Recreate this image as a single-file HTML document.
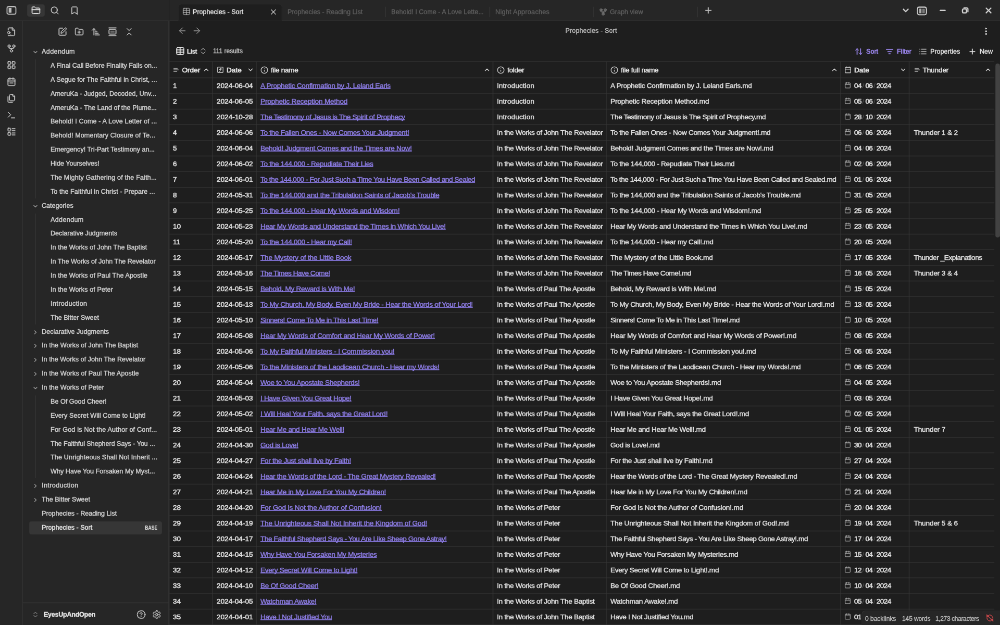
<!DOCTYPE html>
<html lang="en"><head><meta charset="utf-8"><title>Prophecies - Sort - EyesUpAndOpen - Obsidian</title>
<style>
html,body{margin:0;padding:0;background:#1e1e1e;}
body{width:1000px;height:625px;overflow:hidden;position:relative;}
#app{position:absolute;left:0;top:0;width:1920px;height:1200px;transform:scale(0.5208333);transform-origin:0 0;
 font-family:"Liberation Sans",sans-serif;font-size:12.6px;color:#e4e4e4;-webkit-text-stroke:0.4px currentColor;background:#1e1e1e;overflow:hidden;}
.ic{display:block;flex:none;}
/* top-left */
.topleft{position:absolute;left:0;top:0;width:325px;height:40px;background:#262626;border-bottom:1px solid #3c3c3c;box-sizing:border-box;}
.tb-btn{position:absolute;top:8px;width:30px;height:24px;display:flex;align-items:center;justify-content:center;color:#bdbdbd;border-radius:4px;}
.tb-btn.act{background:#363636;color:#e0e0e0;}
/* ribbon */
.ribbon{position:absolute;left:0;top:40px;width:44px;height:1160px;background:#262626;border-right:1px solid #3c3c3c;box-sizing:border-box;padding-top:8px;}
.rb{display:flex;width:43px;height:26px;margin-bottom:6px;align-items:center;justify-content:center;color:#bdbdbd;}
/* sidebar */
.sidebar{position:absolute;left:44px;top:40px;width:281px;height:1160px;background:#262626;border-right:1px solid #3c3c3c;box-sizing:border-box;}
.navbtns{position:absolute;left:1px;top:8px;width:278px;height:26px;display:flex;justify-content:center;gap:2px;}
.nb{width:30px;height:26px;display:flex;align-items:center;justify-content:center;color:#bdbdbd;}
.tree{position:absolute;left:12px;top:47.2px;width:255px;will-change:transform;}
.ti{position:relative;height:24.88px;margin-bottom:2px;line-height:24.88px;white-space:nowrap;color:#cecece;font-size:12.6px;border-radius:4px;-webkit-text-stroke:0.5px currentColor;}
.ti.fold{padding-left:24px;}
.ti .chev{position:absolute;left:6px;top:7px;color:#959595;}
.kids{margin-left:12px;padding-left:5px;}
.ti.kid{padding-left:24px;}
.ti.file{padding-left:24px;}
.ti.active{background:#363636;color:#e4e4e4;}
.tag{position:absolute;right:9px;top:6.5px;font-size:10.5px;line-height:12px;font-weight:700;letter-spacing:0;color:#d8d8d8;-webkit-text-stroke:0.15px currentColor;transform:scaleX(.82);transform-origin:100% 50%;}
.vault{position:absolute;left:0;bottom:0;width:280px;height:42px;border-top:1px solid #3c3c3c;}
.vsw{position:absolute;left:17px;top:15px;color:#909090;}
.vname{position:absolute;left:40px;top:13px;font-size:12.6px;font-weight:700;color:#e4e4e4;line-height:18px;letter-spacing:-.29px;-webkit-text-stroke:0.4px currentColor;}
.vic{position:absolute;top:13px;color:#bdbdbd;}
.v1{left:218px}.v2{left:248px}
/* tabbar */
.tabbar{position:absolute;left:325px;top:0;width:1595px;height:40px;background:#262626;border-bottom:1px solid #3c3c3c;box-sizing:border-box;}
.tab{position:absolute;top:7px;height:33px;box-sizing:border-box;color:#5e5e5e;font-size:12.6px;line-height:26px;white-space:nowrap;}
.tab.active{left:17px;width:199.5px;background:#1e1e1e;border:1px solid #2c2c2c;border-bottom:none;border-radius:7px 7px 0 0;color:#e4e4e4;}
.tab .tt{position:absolute;left:10px;top:3px;}
.tab.active .tt{left:27px;top:2px}
.tab .ticon{position:absolute;left:7.1px;top:6.3px;color:#b4b4b4}
.tab .tx{position:absolute;right:8px;top:7px;color:#e4e4e4}
.t2{left:217px;width:199.3px;border-right:1px solid #3c3c3c;height:20px;top:13px}
.t3{left:416.3px;width:199.3px;border-right:1px solid #3c3c3c;height:20px;top:13px}
.t4{left:615.6px;width:199.3px;border-right:1px solid #3c3c3c;height:20px;top:13px}
.t5{left:814.9px;width:199.8px;border-right:1px solid #3c3c3c;height:20px;top:13px}
.t2 .tt,.t3 .tt,.t4 .tt,.t5 .tt{top:-3px}
.t5 .tt{left:31px}
.t4 .tt{letter-spacing:.3px}
.t5 .ticon{left:10px;color:#808080}
.t5 .ticon{top:2px}
.newtab{position:absolute;left:1026px;top:11px;color:#bdbdbd}
.wc{position:absolute;top:11px;color:#d0d0d0}
.w1{left:1405px}.w2{left:1435px;top:10.5px}.w3{left:1477px;top:12px}.w4{left:1520px;top:12px}.w5{left:1564px}
/* main */
.main{position:absolute;left:325px;top:40px;width:1595px;height:1160px;background:#1e1e1e;}
.vh{position:absolute;left:0;top:0;width:1595px;height:40px;}
.nav1{position:absolute;left:16px;top:10px;color:#8a8a8a}
.nav2{position:absolute;left:44px;top:10px;color:#8a8a8a}
.vtitle{position:absolute;left:560px;width:500px;text-align:center;top:10px;line-height:18px;font-size:12.6px;color:#bcbcbc;letter-spacing:.1px}
.more{position:absolute;left:1559px;top:11px;color:#d0d0d0}
.toolbar{position:absolute;left:0;top:40px;width:1595px;height:38px;}
.tl{position:absolute;top:10px;line-height:18px;color:#e4e4e4}
.l1{left:12px;top:9px}.l2{left:34px;font-weight:700;font-size:12px;letter-spacing:-.6px;-webkit-text-stroke:0.2px currentColor}.l3{left:57px;top:10px;color:#a8a8a8}.l4{left:84px;font-size:12px;color:#c4c4c4;top:9px}
.tr{position:absolute;top:9.7px;display:flex;align-items:center;gap:6px;color:#e4e4e4;font-size:12.6px;line-height:18px}
.tr i{font-style:normal}
.tr.acc{color:#9d88f0;-webkit-text-stroke:0.65px currentColor}
.r1{left:1316px}.r2{left:1375px}.r3{left:1439px}.r4{left:1534px}
/* table */
.tbl{position:absolute;left:0;top:78px;width:1583px;padding-top:1px;will-change:transform;}
.row{position:relative;height:30px;box-sizing:border-box;padding-bottom:1px;display:flex;}
.cell{position:relative;box-sizing:border-box;height:29px;line-height:29px;padding-top:0.6px;margin-right:1px;padding-left:7px;white-space:nowrap;overflow:hidden;font-size:13.6px;letter-spacing:-0.29px;color:#dedede;-webkit-text-stroke:0.55px currentColor;flex:none}
.row .c1,.row .c2,.row .c6{letter-spacing:0;-webkit-text-stroke:0.7px currentColor}
.row .c7{letter-spacing:-.13px;padding-left:8.5px}
.c1{width:83px}.c2{width:83px}.c3{width:453px}.c4{width:217px}.c5{width:448px}.c6{width:131px}.c7{width:162px;margin-right:0}
.row.head{height:30.8px}
.head .cell{color:#bdbdbd;display:flex;align-items:center;gap:5px;padding-top:1px}
.head .cell span{color:#e4e4e4}
.hic{color:#bdbdbd}
.hch{color:#cfcfcf;margin-left:2px}
.hch.right{position:absolute;right:4px;top:8px}
.c2 .hch{margin-left:5px}
.c1 .hic{margin-right:.5px}
.c1 .hch{margin-left:0}
.c3 a{color:#8b7be0;text-decoration:underline;text-decoration-thickness:1.7px;text-underline-offset:0.4px;text-decoration-skip-ink:none;text-decoration-color:#7a6cc8;}
.c6{display:flex;align-items:center;}
.dic{color:#a0a0a0;margin-right:6px;margin-top:-3px}
.dt{letter-spacing:-0.6px}
.dt em{font-style:normal;color:#5a5a5a;padding:0 2.1px 0 1.6px;letter-spacing:0;-webkit-text-stroke:0}
.vscroll{position:absolute;left:1585.5px;top:82px;width:9px;height:334px;background:#424242;border-radius:4.5px;}
.status{position:absolute;left:1329px;top:1132px;height:28px;width:266px;background:#262626;border-top:1px solid #3c3c3c;border-left:1px solid #3c3c3c;border-radius:8px 0 0 0;box-sizing:border-box;font-size:12px;color:#bdbdbd;white-space:nowrap;line-height:30px}
.status span{position:absolute;top:0}
.s1{left:6px}.s2{left:77px;letter-spacing:-.1px}.s3{left:141px;letter-spacing:-.36px}
.sync{position:absolute;left:238px;top:6px;color:#d04a4c}

.sline{position:absolute;left:323.7px;top:40px;width:1.3px;height:1160px;background:#414141;}

.grid{position:absolute;left:0;top:78px;width:1584px;height:1082px;}
.hl{position:absolute;left:0;width:1584px;height:1px;background:#383838}
.vl{position:absolute;top:0;width:1px;height:1082px;background:#383838}
.guide{position:absolute;left:24px;width:1px;background:#3a3a3a}
.tt,.vtitle,.l2,.l4,.tr i,.status span,.vname,.tree,.tbl{will-change:transform;z-index:2}

</style></head>
<body>
<div id="app">
<div class="topleft"><span class="tb-btn" style="left:7px"><svg class="ic " width="20" height="20" viewBox="0 0 24 24" fill="none" stroke="currentColor" stroke-width="2.5" stroke-linecap="round" stroke-linejoin="round" ><rect x="1.600" y="3.300" width="20.800" height="17.400" rx="4"/><rect x="5.600" y="6.600" width="6.400" height="10.800" rx="0.800" fill="currentColor" stroke="none"/></svg></span><span class="tb-btn act" style="left:52px;width:34px"><svg class="ic " width="18" height="18" viewBox="0 0 24 24" fill="none" stroke="currentColor" stroke-width="2.5" stroke-linecap="round" stroke-linejoin="round" ><path d="M20 20a2 2 0 0 0 2-2V8a2 2 0 0 0-2-2h-7.900a2 2 0 0 1-1.690-.9L9.600 3.900A2 2 0 0 0 7.930 3H4a2 2 0 0 0-2 2v13a2 2 0 0 0 2 2Z"/><path d="M2 10h20"/></svg></span><span class="tb-btn" style="left:90px"><svg class="ic " width="18" height="18" viewBox="0 0 24 24" fill="none" stroke="currentColor" stroke-width="2.5" stroke-linecap="round" stroke-linejoin="round" ><circle cx="11" cy="11" r="8"/><path d="m21 21-4.300-4.300"/></svg></span><span class="tb-btn" style="left:128px"><svg class="ic " width="18" height="18" viewBox="0 0 24 24" fill="none" stroke="currentColor" stroke-width="2.5" stroke-linecap="round" stroke-linejoin="round" ><path d="m19 21-7-4-7 4V5a2 2 0 0 1 2-2h10a2 2 0 0 1 2 2v16z"/></svg></span></div>
<div class="ribbon"><span class="rb"><svg class="ic " width="18" height="18" viewBox="0 0 24 24" fill="none" stroke="currentColor" stroke-width="2.5" stroke-linecap="round" stroke-linejoin="round" ><path d="M4 22h14a2 2 0 0 0 2-2V7.500L14.500 2H6a2 2 0 0 0-2 2v3"/><polyline points="14 2 14 8 20 8"/><circle cx="5" cy="14" r="3"/><path d="m9 18-1.500-1.500"/></svg></span><span class="rb"><svg class="ic " width="18" height="18" viewBox="0 0 24 24" fill="none" stroke="currentColor" stroke-width="2.5" stroke-linecap="round" stroke-linejoin="round" ><circle cx="12" cy="18" r="3"/><circle cx="6" cy="6" r="3"/><circle cx="18" cy="6" r="3"/><path d="M18 9v2c0 .6-.4 1-1 1H7c-.6 0-1-.4-1-1V9"/><path d="M12 12v3"/></svg></span><span class="rb"><svg class="ic " width="18" height="18" viewBox="0 0 24 24" fill="none" stroke="currentColor" stroke-width="2.5" stroke-linecap="round" stroke-linejoin="round" ><rect width="7" height="7" x="3" y="3" rx="1"/><rect width="7" height="7" x="14" y="3" rx="1"/><rect width="7" height="7" x="14" y="14" rx="1"/><rect width="7" height="7" x="3" y="14" rx="1"/></svg></span><span class="rb"><svg class="ic " width="18" height="18" viewBox="0 0 24 24" fill="none" stroke="currentColor" stroke-width="2.5" stroke-linecap="round" stroke-linejoin="round" ><path d="M8 2v4"/><path d="M16 2v4"/><rect width="18" height="18" x="3" y="4" rx="2"/><path d="M3 10h18"/><path d="M8 15h8"/></svg></span><span class="rb"><svg class="ic " width="18" height="18" viewBox="0 0 24 24" fill="none" stroke="currentColor" stroke-width="2.5" stroke-linecap="round" stroke-linejoin="round" ><path d="M20 7h-3a2 2 0 0 1-2-2V2"/><path d="M9 18a2 2 0 0 1-2-2V4a2 2 0 0 1 2-2h7l4 4v10a2 2 0 0 1-2 2Z"/><path d="M3 7.600v12.800A1.600 1.600 0 0 0 4.600 22h9.800"/></svg></span><span class="rb"><svg class="ic " width="18" height="18" viewBox="0 0 24 24" fill="none" stroke="currentColor" stroke-width="2.5" stroke-linecap="round" stroke-linejoin="round" ><polyline points="4 17 10 11 4 5"/><line x1="12" x2="20" y1="19" y2="19"/></svg></span><span class="rb"><svg class="ic " width="18" height="18" viewBox="0 0 24 24" fill="none" stroke="currentColor" stroke-width="2.5" stroke-linecap="round" stroke-linejoin="round" ><rect width="7" height="7" x="3" y="3" rx="1"/><rect width="7" height="7" x="3" y="14" rx="1"/><path d="M14 4h7"/><path d="M14 9h7"/><path d="M14 15h7"/><path d="M14 20h7"/></svg></span></div>
<div class="sidebar">
<div class="navbtns"><span class="nb"><svg class="ic " width="18" height="18" viewBox="0 0 24 24" fill="none" stroke="currentColor" stroke-width="2.5" stroke-linecap="round" stroke-linejoin="round" ><path d="M12 3H5a2 2 0 0 0-2 2v14a2 2 0 0 0 2 2h14a2 2 0 0 0 2-2v-7"/><path d="M18.375 2.625a2.121 2.121 0 1 1 3 3L12 15l-4 1 1-4Z"/></svg></span><span class="nb"><svg class="ic " width="18" height="18" viewBox="0 0 24 24" fill="none" stroke="currentColor" stroke-width="2.5" stroke-linecap="round" stroke-linejoin="round" ><path d="M12 10v6"/><path d="M9 13h6"/><path d="M20 20a2 2 0 0 0 2-2V8a2 2 0 0 0-2-2h-7.900a2 2 0 0 1-1.690-.9L9.600 3.900A2 2 0 0 0 7.930 3H4a2 2 0 0 0-2 2v13a2 2 0 0 0 2 2Z"/></svg></span><span class="nb"><svg class="ic " width="18" height="18" viewBox="0 0 24 24" fill="none" stroke="currentColor" stroke-width="2.5" stroke-linecap="round" stroke-linejoin="round" ><path d="m3 8 4-4 4 4"/><path d="M7 4v16"/><path d="M11 12h4"/><path d="M11 16h7"/><path d="M11 20h10"/></svg></span><span class="nb"><svg class="ic " width="18" height="18" viewBox="0 0 24 24" fill="none" stroke="currentColor" stroke-width="2.5" stroke-linecap="round" stroke-linejoin="round" ><path d="M3 2h18"/><rect width="18" height="12" x="3" y="6" rx="2"/><rect x="6.500" y="9.500" width="11" height="5" fill="currentColor" stroke="none" opacity=".45"/><path d="M3 22h18"/></svg></span><span class="nb"><svg class="ic " width="18" height="18" viewBox="0 0 24 24" fill="none" stroke="currentColor" stroke-width="2.5" stroke-linecap="round" stroke-linejoin="round" ><path d="m7 20 5-5 5 5"/><path d="m7 4 5 5 5-5"/></svg></span></div>
<div class="guide" style="top:74.08px;height:266.80px"></div><div class="guide" style="top:369.76px;height:213.04px"></div><div class="guide" style="top:719.20px;height:159.28px"></div><div class="tree">
<div class="ti fold"><svg class="ic chev" width="12" height="12" viewBox="0 0 24 24" fill="none" stroke="currentColor" stroke-width="3.25" stroke-linecap="round" stroke-linejoin="round" ><path d="m6 9 6 6 6-6"/></svg><span style="letter-spacing:0.372px">Addendum</span></div>
<div class="kids">
<div class="ti kid"><span style="letter-spacing:-0.034px">A Final Call Before Finality Falls on...</span></div>
<div class="ti kid"><span style="letter-spacing:0.044px">A Segue for The Faithful in Christ, ...</span></div>
<div class="ti kid"><span style="letter-spacing:0.049px">AmeruKa - Judged, Decoded, Unv...</span></div>
<div class="ti kid"><span style="letter-spacing:0.076px">AmeruKa - The Land of the Plume...</span></div>
<div class="ti kid"><span style="letter-spacing:0.135px">Behold! I Come - A Love Letter of ...</span></div>
<div class="ti kid"><span style="letter-spacing:0.116px">Behold! Momentary Closure of Te...</span></div>
<div class="ti kid"><span>Emergency! Tri-Part Testimony an...</span></div>
<div class="ti kid"><span>Hide Yourselves!</span></div>
<div class="ti kid"><span style="letter-spacing:0.163px">The Mighty Gathering of the Faith...</span></div>
<div class="ti kid"><span style="letter-spacing:0.044px">To the Faithful in Christ - Prepare ...</span></div>
</div>
<div class="ti fold"><svg class="ic chev" width="12" height="12" viewBox="0 0 24 24" fill="none" stroke="currentColor" stroke-width="3.25" stroke-linecap="round" stroke-linejoin="round" ><path d="m6 9 6 6 6-6"/></svg><span>Categories</span></div>
<div class="kids">
<div class="ti kid"><span style="letter-spacing:0.348px">Addendum</span></div>
<div class="ti kid"><span>Declarative Judgments</span></div>
<div class="ti kid"><span style="letter-spacing:0.096px">In the Works of John The Baptist</span></div>
<div class="ti kid"><span>In The Works of John The Revelator</span></div>
<div class="ti kid"><span style="letter-spacing:0.102px">In the Works of Paul The Apostle</span></div>
<div class="ti kid"><span style="letter-spacing:0.091px">In the Works of Peter</span></div>
<div class="ti kid"><span style="letter-spacing:0.392px">Introduction</span></div>
<div class="ti kid"><span>The Bitter Sweet</span></div>
</div>
<div class="ti fold"><svg class="ic chev" width="12" height="12" viewBox="0 0 24 24" fill="none" stroke="currentColor" stroke-width="3.25" stroke-linecap="round" stroke-linejoin="round" ><path d="m9 18 6-6-6-6"/></svg><span style="letter-spacing:0.05px">Declarative Judgments</span></div>
<div class="ti fold"><svg class="ic chev" width="12" height="12" viewBox="0 0 24 24" fill="none" stroke="currentColor" stroke-width="3.25" stroke-linecap="round" stroke-linejoin="round" ><path d="m9 18 6-6-6-6"/></svg><span style="letter-spacing:0.096px">In the Works of John The Baptist</span></div>
<div class="ti fold"><svg class="ic chev" width="12" height="12" viewBox="0 0 24 24" fill="none" stroke="currentColor" stroke-width="3.25" stroke-linecap="round" stroke-linejoin="round" ><path d="m9 18 6-6-6-6"/></svg><span style="letter-spacing:0.048px">In the Works of John The Revelator</span></div>
<div class="ti fold"><svg class="ic chev" width="12" height="12" viewBox="0 0 24 24" fill="none" stroke="currentColor" stroke-width="3.25" stroke-linecap="round" stroke-linejoin="round" ><path d="m9 18 6-6-6-6"/></svg><span style="letter-spacing:0.117px">In the Works of Paul The Apostle</span></div>
<div class="ti fold"><svg class="ic chev" width="12" height="12" viewBox="0 0 24 24" fill="none" stroke="currentColor" stroke-width="3.25" stroke-linecap="round" stroke-linejoin="round" ><path d="m6 9 6 6 6-6"/></svg><span style="letter-spacing:0.091px">In the Works of Peter</span></div>
<div class="kids">
<div class="ti kid"><span>Be Of Good Cheer!</span></div>
<div class="ti kid"><span style="letter-spacing:0.051px">Every Secret Will Come to Light!</span></div>
<div class="ti kid"><span style="letter-spacing:0.197px">For God is Not the Author of Conf...</span></div>
<div class="ti kid"><span style="letter-spacing:-0.048px">The Faithful Shepherd Says - You ...</span></div>
<div class="ti kid"><span style="letter-spacing:0.14px">The Unrighteous Shall Not Inherit ...</span></div>
<div class="ti kid"><span style="letter-spacing:0.036px">Why Have You Forsaken My Myst...</span></div>
</div>
<div class="ti fold"><svg class="ic chev" width="12" height="12" viewBox="0 0 24 24" fill="none" stroke="currentColor" stroke-width="3.25" stroke-linecap="round" stroke-linejoin="round" ><path d="m9 18 6-6-6-6"/></svg><span style="letter-spacing:0.4px">Introduction</span></div>
<div class="ti fold"><svg class="ic chev" width="12" height="12" viewBox="0 0 24 24" fill="none" stroke="currentColor" stroke-width="3.25" stroke-linecap="round" stroke-linejoin="round" ><path d="m9 18 6-6-6-6"/></svg><span>The Bitter Sweet</span></div>
<div class="ti file"><span>Prophecies - Reading List</span></div>
<div class="ti file active"><span>Prophecies - Sort</span><b class="tag">BASE</b></div>
</div>
<div class="vault"><span class="vsw"><svg class="ic " width="14" height="14" viewBox="0 0 24 24" fill="none" stroke="currentColor" stroke-width="2.5" stroke-linecap="round" stroke-linejoin="round" ><path d="m7 15 5 5 5-5"/><path d="m7 9 5-5 5 5"/></svg></span><span class="vname">EyesUpAndOpen</span><span class="vic v1"><svg class="ic " width="18" height="18" viewBox="0 0 24 24" fill="none" stroke="currentColor" stroke-width="2.5" stroke-linecap="round" stroke-linejoin="round" ><circle cx="12" cy="12" r="10"/><path d="M9.090 9a3 3 0 0 1 5.830 1c0 2-3 3-3 3"/><path d="M12 17h.01"/></svg></span><span class="vic v2"><svg class="ic " width="18" height="18" viewBox="0 0 24 24" fill="none" stroke="currentColor" stroke-width="2.5" stroke-linecap="round" stroke-linejoin="round" ><path d="M12.220 2h-.44a2 2 0 0 0-2 2v.18a2 2 0 0 1-1 1.730l-.43.250a2 2 0 0 1-2 0l-.15-.08a2 2 0 0 0-2.730.730l-.22.380a2 2 0 0 0 .730 2.730l.15.100a2 2 0 0 1 1 1.720v.510a2 2 0 0 1-1 1.740l-.15.090a2 2 0 0 0-.730 2.730l.22.380a2 2 0 0 0 2.730.730l.15-.08a2 2 0 0 1 2 0l.43.250a2 2 0 0 1 1 1.730V20a2 2 0 0 0 2 2h.44a2 2 0 0 0 2-2v-.18a2 2 0 0 1 1-1.730l.43-.250a2 2 0 0 1 2 0l.15.080a2 2 0 0 0 2.730-.730l.22-.390a2 2 0 0 0-.730-2.730l-.15-.08a2 2 0 0 1-1-1.740v-.5a2 2 0 0 1 1-1.740l.15-.09a2 2 0 0 0 .730-2.730l-.22-.380a2 2 0 0 0-2.730-.730l-.15.080a2 2 0 0 1-2 0l-.43-.250a2 2 0 0 1-1-1.730V4a2 2 0 0 0-2-2z"/><circle cx="12" cy="12" r="3"/></svg></span></div>
</div>
<div class="tabbar">
<div class="tab active"><svg class="ic ticon" width="16" height="16" viewBox="0 0 24 24" fill="none" stroke="currentColor" stroke-width="1.875" stroke-linecap="round" stroke-linejoin="round" ><path d="M12 3v18"/><rect width="18" height="18" x="3" y="3" rx="2"/><path d="M3 9h18"/><path d="M3 15h18"/></svg><span class="tt">Prophecies - Sort</span><svg class="ic tx" width="16" height="16" viewBox="0 0 24 24" fill="none" stroke="currentColor" stroke-width="2.5" stroke-linecap="round" stroke-linejoin="round" ><path d="M18 6 6 18"/><path d="m6 6 12 12"/></svg></div>
<div class="tab t2"><span class="tt">Prophecies - Reading List</span></div>
<div class="tab t3"><span class="tt">Behold! I Come - A Love Lette...</span></div>
<div class="tab t4"><span class="tt">Night Approaches</span></div>
<div class="tab t5"><svg class="ic ticon" width="16" height="16" viewBox="0 0 24 24" fill="none" stroke="currentColor" stroke-width="2.5" stroke-linecap="round" stroke-linejoin="round" ><circle cx="12" cy="18" r="3"/><circle cx="6" cy="6" r="3"/><circle cx="18" cy="6" r="3"/><path d="M18 9v2c0 .6-.4 1-1 1H7c-.6 0-1-.4-1-1V9"/><path d="M12 12v3"/></svg><span class="tt">Graph view</span></div>
<span class="newtab"><svg class="ic " width="18" height="18" viewBox="0 0 24 24" fill="none" stroke="currentColor" stroke-width="2.5" stroke-linecap="round" stroke-linejoin="round" ><path d="M5 12h14"/><path d="M12 5v14"/></svg></span>
<span class="wc w1"><svg class="ic " width="18" height="18" viewBox="0 0 24 24" fill="none" stroke="currentColor" stroke-width="3.0" stroke-linecap="round" stroke-linejoin="round" ><path d="m6 9 6 6 6-6"/></svg></span><span class="wc w2"><svg class="ic " width="20" height="20" viewBox="0 0 24 24" fill="none" stroke="currentColor" stroke-width="2.5" stroke-linecap="round" stroke-linejoin="round" ><rect x="1.600" y="3.300" width="20.800" height="17.400" rx="4"/><rect x="5.200" y="6.800" width="13.600" height="10.400" rx="0.800" fill="currentColor" stroke="none" opacity=".5"/><rect x="6" y="6.800" width="5" height="10.400" fill="currentColor" stroke="none" opacity=".6"/><path d="M11.800 6.500v11" stroke="#262626" stroke-width="1.600"/></svg></span><span class="wc w3"><svg class="ic " width="16" height="16" viewBox="0 0 24 24" fill="none" stroke="currentColor" stroke-width="3.5" stroke-linecap="round" stroke-linejoin="round" ><path d="M5 12h14"/></svg></span><span class="wc w4"><svg class="ic " width="16" height="16" viewBox="0 0 24 24" fill="none" stroke="currentColor" stroke-width="3.75" stroke-linecap="round" stroke-linejoin="round" ><rect x="4.500" y="7.500" width="11.500" height="11.500" rx="3.500"/><path d="M9 4.500h7.500a3.500 3.500 0 0 1 3.500 3.500v7.500"/></svg></span><span class="wc w5"><svg class="ic " width="18" height="18" viewBox="0 0 24 24" fill="none" stroke="currentColor" stroke-width="3.0" stroke-linecap="round" stroke-linejoin="round" ><path d="M18 6 6 18"/><path d="m6 6 12 12"/></svg></span>
</div>
<div class="main">
<div class="vh"><span class="nav1"><svg class="ic " width="18" height="18" viewBox="0 0 24 24" fill="none" stroke="currentColor" stroke-width="2.5" stroke-linecap="round" stroke-linejoin="round" ><path d="m12 19-7-7 7-7"/><path d="M19 12H5"/></svg></span><span class="nav2"><svg class="ic " width="18" height="18" viewBox="0 0 24 24" fill="none" stroke="currentColor" stroke-width="2.5" stroke-linecap="round" stroke-linejoin="round" ><path d="M5 12h14"/><path d="m12 5 7 7-7 7"/></svg></span><span class="vtitle">Prophecies - Sort</span><span class="more"><svg class="ic " width="18" height="18" viewBox="0 0 24 24" fill="none" stroke="currentColor" stroke-width="2.5" stroke-linecap="round" stroke-linejoin="round" ><circle cx="12" cy="12" r="1.200"/><circle cx="12" cy="5" r="1.200"/><circle cx="12" cy="19" r="1.200"/></svg></span></div>
<div class="toolbar"><span class="tl l1"><svg class="ic " width="18" height="18" viewBox="0 0 24 24" fill="none" stroke="currentColor" stroke-width="2.5" stroke-linecap="round" stroke-linejoin="round" ><path d="M12 3v18"/><rect width="18" height="18" x="3" y="3" rx="2"/><path d="M3 9h18"/><path d="M3 15h18"/></svg></span><span class="tl l2">List</span><span class="tl l3"><svg class="ic " width="16" height="16" viewBox="0 0 24 24" fill="none" stroke="currentColor" stroke-width="2.5" stroke-linecap="round" stroke-linejoin="round" ><path d="m7 15 5 5 5-5"/><path d="m7 9 5-5 5 5"/></svg></span><span class="tl l4">111 results</span><span class="tr r1 acc"><svg class="ic " width="16" height="16" viewBox="0 0 24 24" fill="none" stroke="currentColor" stroke-width="2.5" stroke-linecap="round" stroke-linejoin="round" ><path d="m21 16-4 4-4-4"/><path d="M17 20V4"/><path d="m3 8 4-4 4 4"/><path d="M7 4v16"/></svg><i>Sort</i></span><span class="tr r2 acc"><svg class="ic " width="16" height="16" viewBox="0 0 24 24" fill="none" stroke="currentColor" stroke-width="2.5" stroke-linecap="round" stroke-linejoin="round" ><path d="M3 6h18"/><path d="M7 12h10"/><path d="M10 18h4"/></svg><i>Filter</i></span><span class="tr r3"><svg class="ic " width="16" height="16" viewBox="0 0 24 24" fill="none" stroke="currentColor" stroke-width="1.875" stroke-linecap="round" stroke-linejoin="round" ><path d="M3 12h.01"/><path d="M3 18.500h.01"/><path d="M3 5.500h.01"/><path d="M8 12h13"/><path d="M8 18.500h13"/><path d="M8 5.500h13"/></svg><i>Properties</i></span><span class="tr r4"><svg class="ic " width="16" height="16" viewBox="0 0 24 24" fill="none" stroke="currentColor" stroke-width="2.5" stroke-linecap="round" stroke-linejoin="round" ><path d="M5 12h14"/><path d="M12 5v14"/></svg><i>New</i></span></div>
<div class="grid"><div class="hl" style="top:0.0px"></div><div class="hl" style="top:30.8px"></div><div class="hl" style="top:60.8px"></div><div class="hl" style="top:90.8px"></div><div class="hl" style="top:120.8px"></div><div class="hl" style="top:150.8px"></div><div class="hl" style="top:180.8px"></div><div class="hl" style="top:210.8px"></div><div class="hl" style="top:240.8px"></div><div class="hl" style="top:270.8px"></div><div class="hl" style="top:300.8px"></div><div class="hl" style="top:330.8px"></div><div class="hl" style="top:360.8px"></div><div class="hl" style="top:390.8px"></div><div class="hl" style="top:420.8px"></div><div class="hl" style="top:450.8px"></div><div class="hl" style="top:480.8px"></div><div class="hl" style="top:510.8px"></div><div class="hl" style="top:540.8px"></div><div class="hl" style="top:570.8px"></div><div class="hl" style="top:600.8px"></div><div class="hl" style="top:630.8px"></div><div class="hl" style="top:660.8px"></div><div class="hl" style="top:690.8px"></div><div class="hl" style="top:720.8px"></div><div class="hl" style="top:750.8px"></div><div class="hl" style="top:780.8px"></div><div class="hl" style="top:810.8px"></div><div class="hl" style="top:840.8px"></div><div class="hl" style="top:870.8px"></div><div class="hl" style="top:900.8px"></div><div class="hl" style="top:930.8px"></div><div class="hl" style="top:960.8px"></div><div class="hl" style="top:990.8px"></div><div class="hl" style="top:1020.8px"></div><div class="hl" style="top:1050.8px"></div><div class="hl" style="top:1080.8px"></div><div class="vl" style="left:83px"></div><div class="vl" style="left:167px"></div><div class="vl" style="left:621px"></div><div class="vl" style="left:839px"></div><div class="vl" style="left:1288px"></div><div class="vl" style="left:1420px"></div></div>
<div class="tbl">
<div class="row head"><div class="cell c1"><svg class="ic hic" width="12" height="12" viewBox="0 0 24 24" fill="none" stroke="currentColor" stroke-width="2.5" stroke-linecap="round" stroke-linejoin="round" ><path d="M17 6.100H3"/><path d="M21 12.100H3"/><path d="M15.100 18H3"/></svg><span>Order</span><svg class="ic hch" width="14" height="14" viewBox="0 0 24 24" fill="none" stroke="currentColor" stroke-width="2.5" stroke-linecap="round" stroke-linejoin="round" ><path d="m18 15-6-6-6 6"/></svg></div><div class="cell c2"><svg class="ic hic" width="14" height="14" viewBox="0 0 24 24" fill="none" stroke="currentColor" stroke-width="2.5" stroke-linecap="round" stroke-linejoin="round" ><rect width="18" height="18" x="3" y="3" rx="2" ry="2"/><path d="M9 17c2 0 2.800-1 2.800-2.800V10c0-2 1-3.300 3.200-3"/><path d="M9 11.200h5.700"/></svg><span>Date</span><svg class="ic hch" width="14" height="14" viewBox="0 0 24 24" fill="none" stroke="currentColor" stroke-width="2.5" stroke-linecap="round" stroke-linejoin="round" ><path d="m6 9 6 6 6-6"/></svg></div><div class="cell c3"><svg class="ic hic" width="15" height="15" viewBox="0 0 24 24" fill="none" stroke="currentColor" stroke-width="2.5" stroke-linecap="round" stroke-linejoin="round" ><circle cx="12" cy="12" r="10"/><path d="M12 16v-4"/><path d="M12 8h.01"/></svg><span>file name</span><svg class="ic hch right" width="14" height="14" viewBox="0 0 24 24" fill="none" stroke="currentColor" stroke-width="2.5" stroke-linecap="round" stroke-linejoin="round" ><path d="m18 15-6-6-6 6"/></svg></div><div class="cell c4"><svg class="ic hic" width="15" height="15" viewBox="0 0 24 24" fill="none" stroke="currentColor" stroke-width="2.5" stroke-linecap="round" stroke-linejoin="round" ><circle cx="12" cy="12" r="10"/><path d="M12 16v-4"/><path d="M12 8h.01"/></svg><span>folder</span></div><div class="cell c5"><svg class="ic hic" width="15" height="15" viewBox="0 0 24 24" fill="none" stroke="currentColor" stroke-width="2.5" stroke-linecap="round" stroke-linejoin="round" ><circle cx="12" cy="12" r="10"/><path d="M12 16v-4"/><path d="M12 8h.01"/></svg><span>file full name</span><svg class="ic hch right" width="14" height="14" viewBox="0 0 24 24" fill="none" stroke="currentColor" stroke-width="2.5" stroke-linecap="round" stroke-linejoin="round" ><path d="m18 15-6-6-6 6"/></svg></div><div class="cell c6"><svg class="ic hic" width="14" height="14" viewBox="0 0 24 24" fill="none" stroke="currentColor" stroke-width="2.5" stroke-linecap="round" stroke-linejoin="round" ><path d="M8 2v4"/><path d="M16 2v4"/><rect width="18" height="18" x="3" y="4" rx="2"/><path d="M3 10h18"/></svg><span>Date</span><svg class="ic hch right" width="14" height="14" viewBox="0 0 24 24" fill="none" stroke="currentColor" stroke-width="2.5" stroke-linecap="round" stroke-linejoin="round" ><path d="m6 9 6 6 6-6"/></svg></div><div class="cell c7"><svg class="ic hic" width="12" height="12" viewBox="0 0 24 24" fill="none" stroke="currentColor" stroke-width="2.5" stroke-linecap="round" stroke-linejoin="round" ><path d="M17 6.100H3"/><path d="M21 12.100H3"/><path d="M15.100 18H3"/></svg><span>Thunder</span><svg class="ic hch right" width="14" height="14" viewBox="0 0 24 24" fill="none" stroke="currentColor" stroke-width="2.5" stroke-linecap="round" stroke-linejoin="round" ><path d="m18 15-6-6-6 6"/></svg></div></div>
<div class="row"><div class="cell c1">1</div><div class="cell c2">2024-06-04</div><div class="cell c3"><a>A Prophetic Confirmation by J. Leland Earls</a></div><div class="cell c4" style="letter-spacing:.08px">Introduction</div><div class="cell c5">A Prophetic Confirmation by J. Leland Earls.md</div><div class="cell c6"><svg class="ic dic" width="13" height="13" viewBox="0 0 24 24" fill="none" stroke="currentColor" stroke-width="2.5" stroke-linecap="round" stroke-linejoin="round" ><path d="M8 2v4"/><path d="M16 2v4"/><rect width="18" height="18" x="3" y="4" rx="2"/><path d="M3 10h18"/></svg><span class="dt">04<em>/</em>06<em>/</em>2024</span></div><div class="cell c7"></div></div>
<div class="row"><div class="cell c1">2</div><div class="cell c2">2024-06-05</div><div class="cell c3" style="letter-spacing:-0.165px"><a>Prophetic Reception Method</a></div><div class="cell c4" style="letter-spacing:.08px">Introduction</div><div class="cell c5" style="letter-spacing:-0.165px">Prophetic Reception Method.md</div><div class="cell c6"><svg class="ic dic" width="13" height="13" viewBox="0 0 24 24" fill="none" stroke="currentColor" stroke-width="2.5" stroke-linecap="round" stroke-linejoin="round" ><path d="M8 2v4"/><path d="M16 2v4"/><rect width="18" height="18" x="3" y="4" rx="2"/><path d="M3 10h18"/></svg><span class="dt">05<em>/</em>06<em>/</em>2024</span></div><div class="cell c7"></div></div>
<div class="row"><div class="cell c1">3</div><div class="cell c2">2024-10-28</div><div class="cell c3" style="letter-spacing:-0.346px"><a>The Testimony of Jesus is The Spirit of Prophecy</a></div><div class="cell c4" style="letter-spacing:.08px">Introduction</div><div class="cell c5" style="letter-spacing:-0.346px">The Testimony of Jesus is The Spirit of Prophecy.md</div><div class="cell c6"><svg class="ic dic" width="13" height="13" viewBox="0 0 24 24" fill="none" stroke="currentColor" stroke-width="2.5" stroke-linecap="round" stroke-linejoin="round" ><path d="M8 2v4"/><path d="M16 2v4"/><rect width="18" height="18" x="3" y="4" rx="2"/><path d="M3 10h18"/></svg><span class="dt">28<em>/</em>10<em>/</em>2024</span></div><div class="cell c7"></div></div>
<div class="row"><div class="cell c1">4</div><div class="cell c2">2024-06-06</div><div class="cell c3"><a>To the Fallen Ones - Now Comes Your Judgment!</a></div><div class="cell c4">In the Works of John The Revelator</div><div class="cell c5">To the Fallen Ones - Now Comes Your Judgment!.md</div><div class="cell c6"><svg class="ic dic" width="13" height="13" viewBox="0 0 24 24" fill="none" stroke="currentColor" stroke-width="2.5" stroke-linecap="round" stroke-linejoin="round" ><path d="M8 2v4"/><path d="M16 2v4"/><rect width="18" height="18" x="3" y="4" rx="2"/><path d="M3 10h18"/></svg><span class="dt">06<em>/</em>06<em>/</em>2024</span></div><div class="cell c7">Thunder 1 &amp; 2</div></div>
<div class="row"><div class="cell c1">5</div><div class="cell c2">2024-06-04</div><div class="cell c3"><a>Behold! Judgment Comes and the Times are Now!</a></div><div class="cell c4">In the Works of John The Revelator</div><div class="cell c5">Behold! Judgment Comes and the Times are Now!.md</div><div class="cell c6"><svg class="ic dic" width="13" height="13" viewBox="0 0 24 24" fill="none" stroke="currentColor" stroke-width="2.5" stroke-linecap="round" stroke-linejoin="round" ><path d="M8 2v4"/><path d="M16 2v4"/><rect width="18" height="18" x="3" y="4" rx="2"/><path d="M3 10h18"/></svg><span class="dt">04<em>/</em>06<em>/</em>2024</span></div><div class="cell c7"></div></div>
<div class="row"><div class="cell c1">6</div><div class="cell c2">2024-06-02</div><div class="cell c3"><a>To the 144,000 - Repudiate Their Lies</a></div><div class="cell c4">In the Works of John The Revelator</div><div class="cell c5">To the 144,000 - Repudiate Their Lies.md</div><div class="cell c6"><svg class="ic dic" width="13" height="13" viewBox="0 0 24 24" fill="none" stroke="currentColor" stroke-width="2.5" stroke-linecap="round" stroke-linejoin="round" ><path d="M8 2v4"/><path d="M16 2v4"/><rect width="18" height="18" x="3" y="4" rx="2"/><path d="M3 10h18"/></svg><span class="dt">02<em>/</em>06<em>/</em>2024</span></div><div class="cell c7"></div></div>
<div class="row"><div class="cell c1">7</div><div class="cell c2">2024-06-01</div><div class="cell c3" style="letter-spacing:-0.446px"><a>To the 144,000 - For Just Such a Time You Have Been Called and Sealed</a></div><div class="cell c4">In the Works of John The Revelator</div><div class="cell c5" style="letter-spacing:-0.446px">To the 144,000 - For Just Such a Time You Have Been Called and Sealed.md</div><div class="cell c6"><svg class="ic dic" width="13" height="13" viewBox="0 0 24 24" fill="none" stroke="currentColor" stroke-width="2.5" stroke-linecap="round" stroke-linejoin="round" ><path d="M8 2v4"/><path d="M16 2v4"/><rect width="18" height="18" x="3" y="4" rx="2"/><path d="M3 10h18"/></svg><span class="dt">01<em>/</em>06<em>/</em>2024</span></div><div class="cell c7"></div></div>
<div class="row"><div class="cell c1">8</div><div class="cell c2">2024-05-31</div><div class="cell c3"><a>To the 144,000 and the Tribulation Saints of Jacob&#x27;s Trouble</a></div><div class="cell c4">In the Works of John The Revelator</div><div class="cell c5">To the 144,000 and the Tribulation Saints of Jacob&#x27;s Trouble.md</div><div class="cell c6"><svg class="ic dic" width="13" height="13" viewBox="0 0 24 24" fill="none" stroke="currentColor" stroke-width="2.5" stroke-linecap="round" stroke-linejoin="round" ><path d="M8 2v4"/><path d="M16 2v4"/><rect width="18" height="18" x="3" y="4" rx="2"/><path d="M3 10h18"/></svg><span class="dt">31<em>/</em>05<em>/</em>2024</span></div><div class="cell c7"></div></div>
<div class="row"><div class="cell c1">9</div><div class="cell c2">2024-05-25</div><div class="cell c3"><a>To the 144,000 - Hear My Words and Wisdom!</a></div><div class="cell c4">In the Works of John The Revelator</div><div class="cell c5">To the 144,000 - Hear My Words and Wisdom!.md</div><div class="cell c6"><svg class="ic dic" width="13" height="13" viewBox="0 0 24 24" fill="none" stroke="currentColor" stroke-width="2.5" stroke-linecap="round" stroke-linejoin="round" ><path d="M8 2v4"/><path d="M16 2v4"/><rect width="18" height="18" x="3" y="4" rx="2"/><path d="M3 10h18"/></svg><span class="dt">25<em>/</em>05<em>/</em>2024</span></div><div class="cell c7"></div></div>
<div class="row"><div class="cell c1">10</div><div class="cell c2">2024-05-23</div><div class="cell c3"><a>Hear My Words and Understand the Times in Which You Live!</a></div><div class="cell c4">In the Works of John The Revelator</div><div class="cell c5">Hear My Words and Understand the Times in Which You Live!.md</div><div class="cell c6"><svg class="ic dic" width="13" height="13" viewBox="0 0 24 24" fill="none" stroke="currentColor" stroke-width="2.5" stroke-linecap="round" stroke-linejoin="round" ><path d="M8 2v4"/><path d="M16 2v4"/><rect width="18" height="18" x="3" y="4" rx="2"/><path d="M3 10h18"/></svg><span class="dt">23<em>/</em>05<em>/</em>2024</span></div><div class="cell c7"></div></div>
<div class="row"><div class="cell c1">11</div><div class="cell c2">2024-05-20</div><div class="cell c3"><a>To the 144,000 - Hear my Call!</a></div><div class="cell c4">In the Works of John The Revelator</div><div class="cell c5">To the 144,000 - Hear my Call!.md</div><div class="cell c6"><svg class="ic dic" width="13" height="13" viewBox="0 0 24 24" fill="none" stroke="currentColor" stroke-width="2.5" stroke-linecap="round" stroke-linejoin="round" ><path d="M8 2v4"/><path d="M16 2v4"/><rect width="18" height="18" x="3" y="4" rx="2"/><path d="M3 10h18"/></svg><span class="dt">20<em>/</em>05<em>/</em>2024</span></div><div class="cell c7"></div></div>
<div class="row"><div class="cell c1">12</div><div class="cell c2">2024-05-17</div><div class="cell c3" style="letter-spacing:-0.18px"><a>The Mystery of the Little Book</a></div><div class="cell c4">In the Works of John The Revelator</div><div class="cell c5" style="letter-spacing:-0.18px">The Mystery of the Little Book.md</div><div class="cell c6"><svg class="ic dic" width="13" height="13" viewBox="0 0 24 24" fill="none" stroke="currentColor" stroke-width="2.5" stroke-linecap="round" stroke-linejoin="round" ><path d="M8 2v4"/><path d="M16 2v4"/><rect width="18" height="18" x="3" y="4" rx="2"/><path d="M3 10h18"/></svg><span class="dt">17<em>/</em>05<em>/</em>2024</span></div><div class="cell c7" style="letter-spacing:-.41px">Thunder _Explanations</div></div>
<div class="row"><div class="cell c1">13</div><div class="cell c2">2024-05-16</div><div class="cell c3" style="letter-spacing:-0.46px"><a>The Times Have Come!</a></div><div class="cell c4">In the Works of John The Revelator</div><div class="cell c5" style="letter-spacing:-0.46px">The Times Have Come!.md</div><div class="cell c6"><svg class="ic dic" width="13" height="13" viewBox="0 0 24 24" fill="none" stroke="currentColor" stroke-width="2.5" stroke-linecap="round" stroke-linejoin="round" ><path d="M8 2v4"/><path d="M16 2v4"/><rect width="18" height="18" x="3" y="4" rx="2"/><path d="M3 10h18"/></svg><span class="dt">16<em>/</em>05<em>/</em>2024</span></div><div class="cell c7">Thunder 3 &amp; 4</div></div>
<div class="row"><div class="cell c1">14</div><div class="cell c2">2024-05-15</div><div class="cell c3"><a>Behold, My Reward is With Me!</a></div><div class="cell c4">In the Works of Paul The Apostle</div><div class="cell c5">Behold, My Reward is With Me!.md</div><div class="cell c6"><svg class="ic dic" width="13" height="13" viewBox="0 0 24 24" fill="none" stroke="currentColor" stroke-width="2.5" stroke-linecap="round" stroke-linejoin="round" ><path d="M8 2v4"/><path d="M16 2v4"/><rect width="18" height="18" x="3" y="4" rx="2"/><path d="M3 10h18"/></svg><span class="dt">15<em>/</em>05<em>/</em>2024</span></div><div class="cell c7"></div></div>
<div class="row"><div class="cell c1">15</div><div class="cell c2">2024-05-13</div><div class="cell c3"><a>To My Church, My Body, Even My Bride - Hear the Words of Your Lord!</a></div><div class="cell c4">In the Works of Paul The Apostle</div><div class="cell c5">To My Church, My Body, Even My Bride - Hear the Words of Your Lord!.md</div><div class="cell c6"><svg class="ic dic" width="13" height="13" viewBox="0 0 24 24" fill="none" stroke="currentColor" stroke-width="2.5" stroke-linecap="round" stroke-linejoin="round" ><path d="M8 2v4"/><path d="M16 2v4"/><rect width="18" height="18" x="3" y="4" rx="2"/><path d="M3 10h18"/></svg><span class="dt">13<em>/</em>05<em>/</em>2024</span></div><div class="cell c7"></div></div>
<div class="row"><div class="cell c1">16</div><div class="cell c2">2024-05-10</div><div class="cell c3" style="letter-spacing:-0.37px"><a>Sinners! Come To Me in This Last Time!</a></div><div class="cell c4">In the Works of Paul The Apostle</div><div class="cell c5" style="letter-spacing:-0.37px">Sinners! Come To Me in This Last Time!.md</div><div class="cell c6"><svg class="ic dic" width="13" height="13" viewBox="0 0 24 24" fill="none" stroke="currentColor" stroke-width="2.5" stroke-linecap="round" stroke-linejoin="round" ><path d="M8 2v4"/><path d="M16 2v4"/><rect width="18" height="18" x="3" y="4" rx="2"/><path d="M3 10h18"/></svg><span class="dt">10<em>/</em>05<em>/</em>2024</span></div><div class="cell c7"></div></div>
<div class="row"><div class="cell c1">17</div><div class="cell c2">2024-05-08</div><div class="cell c3" style="letter-spacing:-0.23px"><a>Hear My Words of Comfort and Hear My Words of Power!</a></div><div class="cell c4">In the Works of Paul The Apostle</div><div class="cell c5" style="letter-spacing:-0.23px">Hear My Words of Comfort and Hear My Words of Power!.md</div><div class="cell c6"><svg class="ic dic" width="13" height="13" viewBox="0 0 24 24" fill="none" stroke="currentColor" stroke-width="2.5" stroke-linecap="round" stroke-linejoin="round" ><path d="M8 2v4"/><path d="M16 2v4"/><rect width="18" height="18" x="3" y="4" rx="2"/><path d="M3 10h18"/></svg><span class="dt">08<em>/</em>05<em>/</em>2024</span></div><div class="cell c7"></div></div>
<div class="row"><div class="cell c1">18</div><div class="cell c2">2024-05-06</div><div class="cell c3" style="letter-spacing:-0.21px"><a>To My Faithful Ministers - I Commission you!</a></div><div class="cell c4">In the Works of Paul The Apostle</div><div class="cell c5" style="letter-spacing:-0.21px">To My Faithful Ministers - I Commission you!.md</div><div class="cell c6"><svg class="ic dic" width="13" height="13" viewBox="0 0 24 24" fill="none" stroke="currentColor" stroke-width="2.5" stroke-linecap="round" stroke-linejoin="round" ><path d="M8 2v4"/><path d="M16 2v4"/><rect width="18" height="18" x="3" y="4" rx="2"/><path d="M3 10h18"/></svg><span class="dt">06<em>/</em>05<em>/</em>2024</span></div><div class="cell c7"></div></div>
<div class="row"><div class="cell c1">19</div><div class="cell c2">2024-05-06</div><div class="cell c3" style="letter-spacing:-0.24px"><a>To the Ministers of the Laodicean Church - Hear my Words!</a></div><div class="cell c4">In the Works of Paul The Apostle</div><div class="cell c5" style="letter-spacing:-0.24px">To the Ministers of the Laodicean Church - Hear my Words!.md</div><div class="cell c6"><svg class="ic dic" width="13" height="13" viewBox="0 0 24 24" fill="none" stroke="currentColor" stroke-width="2.5" stroke-linecap="round" stroke-linejoin="round" ><path d="M8 2v4"/><path d="M16 2v4"/><rect width="18" height="18" x="3" y="4" rx="2"/><path d="M3 10h18"/></svg><span class="dt">06<em>/</em>05<em>/</em>2024</span></div><div class="cell c7"></div></div>
<div class="row"><div class="cell c1">20</div><div class="cell c2">2024-05-04</div><div class="cell c3"><a>Woe to You Apostate Shepherds!</a></div><div class="cell c4">In the Works of Paul The Apostle</div><div class="cell c5">Woe to You Apostate Shepherds!.md</div><div class="cell c6"><svg class="ic dic" width="13" height="13" viewBox="0 0 24 24" fill="none" stroke="currentColor" stroke-width="2.5" stroke-linecap="round" stroke-linejoin="round" ><path d="M8 2v4"/><path d="M16 2v4"/><rect width="18" height="18" x="3" y="4" rx="2"/><path d="M3 10h18"/></svg><span class="dt">04<em>/</em>05<em>/</em>2024</span></div><div class="cell c7"></div></div>
<div class="row"><div class="cell c1">21</div><div class="cell c2">2024-05-03</div><div class="cell c3"><a>I Have Given You Great Hope!</a></div><div class="cell c4">In the Works of Paul The Apostle</div><div class="cell c5">I Have Given You Great Hope!.md</div><div class="cell c6"><svg class="ic dic" width="13" height="13" viewBox="0 0 24 24" fill="none" stroke="currentColor" stroke-width="2.5" stroke-linecap="round" stroke-linejoin="round" ><path d="M8 2v4"/><path d="M16 2v4"/><rect width="18" height="18" x="3" y="4" rx="2"/><path d="M3 10h18"/></svg><span class="dt">03<em>/</em>05<em>/</em>2024</span></div><div class="cell c7"></div></div>
<div class="row"><div class="cell c1">22</div><div class="cell c2">2024-05-02</div><div class="cell c3"><a>I Will Heal Your Faith, says the Great Lord!</a></div><div class="cell c4">In the Works of Paul The Apostle</div><div class="cell c5">I Will Heal Your Faith, says the Great Lord!.md</div><div class="cell c6"><svg class="ic dic" width="13" height="13" viewBox="0 0 24 24" fill="none" stroke="currentColor" stroke-width="2.5" stroke-linecap="round" stroke-linejoin="round" ><path d="M8 2v4"/><path d="M16 2v4"/><rect width="18" height="18" x="3" y="4" rx="2"/><path d="M3 10h18"/></svg><span class="dt">02<em>/</em>05<em>/</em>2024</span></div><div class="cell c7"></div></div>
<div class="row"><div class="cell c1">23</div><div class="cell c2">2024-05-01</div><div class="cell c3"><a>Hear Me and Hear Me Well!</a></div><div class="cell c4">In the Works of Paul The Apostle</div><div class="cell c5">Hear Me and Hear Me Well!.md</div><div class="cell c6"><svg class="ic dic" width="13" height="13" viewBox="0 0 24 24" fill="none" stroke="currentColor" stroke-width="2.5" stroke-linecap="round" stroke-linejoin="round" ><path d="M8 2v4"/><path d="M16 2v4"/><rect width="18" height="18" x="3" y="4" rx="2"/><path d="M3 10h18"/></svg><span class="dt">01<em>/</em>05<em>/</em>2024</span></div><div class="cell c7">Thunder 7</div></div>
<div class="row"><div class="cell c1">24</div><div class="cell c2">2024-04-30</div><div class="cell c3"><a>God is Love!</a></div><div class="cell c4">In the Works of Paul The Apostle</div><div class="cell c5">God is Love!.md</div><div class="cell c6"><svg class="ic dic" width="13" height="13" viewBox="0 0 24 24" fill="none" stroke="currentColor" stroke-width="2.5" stroke-linecap="round" stroke-linejoin="round" ><path d="M8 2v4"/><path d="M16 2v4"/><rect width="18" height="18" x="3" y="4" rx="2"/><path d="M3 10h18"/></svg><span class="dt">30<em>/</em>04<em>/</em>2024</span></div><div class="cell c7"></div></div>
<div class="row"><div class="cell c1">25</div><div class="cell c2">2024-04-27</div><div class="cell c3"><a>For the Just shall live by Faith!</a></div><div class="cell c4">In the Works of Paul The Apostle</div><div class="cell c5">For the Just shall live by Faith!.md</div><div class="cell c6"><svg class="ic dic" width="13" height="13" viewBox="0 0 24 24" fill="none" stroke="currentColor" stroke-width="2.5" stroke-linecap="round" stroke-linejoin="round" ><path d="M8 2v4"/><path d="M16 2v4"/><rect width="18" height="18" x="3" y="4" rx="2"/><path d="M3 10h18"/></svg><span class="dt">27<em>/</em>04<em>/</em>2024</span></div><div class="cell c7"></div></div>
<div class="row"><div class="cell c1">26</div><div class="cell c2">2024-04-24</div><div class="cell c3"><a>Hear the Words of the Lord - The Great Mystery Revealed!</a></div><div class="cell c4">In the Works of Paul The Apostle</div><div class="cell c5">Hear the Words of the Lord - The Great Mystery Revealed!.md</div><div class="cell c6"><svg class="ic dic" width="13" height="13" viewBox="0 0 24 24" fill="none" stroke="currentColor" stroke-width="2.5" stroke-linecap="round" stroke-linejoin="round" ><path d="M8 2v4"/><path d="M16 2v4"/><rect width="18" height="18" x="3" y="4" rx="2"/><path d="M3 10h18"/></svg><span class="dt">24<em>/</em>04<em>/</em>2024</span></div><div class="cell c7"></div></div>
<div class="row"><div class="cell c1">27</div><div class="cell c2">2024-04-21</div><div class="cell c3"><a>Hear Me in My Love For You My Children!</a></div><div class="cell c4">In the Works of Paul The Apostle</div><div class="cell c5">Hear Me in My Love For You My Children!.md</div><div class="cell c6"><svg class="ic dic" width="13" height="13" viewBox="0 0 24 24" fill="none" stroke="currentColor" stroke-width="2.5" stroke-linecap="round" stroke-linejoin="round" ><path d="M8 2v4"/><path d="M16 2v4"/><rect width="18" height="18" x="3" y="4" rx="2"/><path d="M3 10h18"/></svg><span class="dt">21<em>/</em>04<em>/</em>2024</span></div><div class="cell c7"></div></div>
<div class="row"><div class="cell c1">28</div><div class="cell c2">2024-04-20</div><div class="cell c3" style="letter-spacing:-0.13px"><a>For God is Not the Author of Confusion!</a></div><div class="cell c4">In the Works of Peter</div><div class="cell c5" style="letter-spacing:-0.13px">For God is Not the Author of Confusion!.md</div><div class="cell c6"><svg class="ic dic" width="13" height="13" viewBox="0 0 24 24" fill="none" stroke="currentColor" stroke-width="2.5" stroke-linecap="round" stroke-linejoin="round" ><path d="M8 2v4"/><path d="M16 2v4"/><rect width="18" height="18" x="3" y="4" rx="2"/><path d="M3 10h18"/></svg><span class="dt">20<em>/</em>04<em>/</em>2024</span></div><div class="cell c7"></div></div>
<div class="row"><div class="cell c1">29</div><div class="cell c2">2024-04-19</div><div class="cell c3" style="letter-spacing:-0.175px"><a>The Unrighteous Shall Not Inherit the Kingdom of God!</a></div><div class="cell c4">In the Works of Peter</div><div class="cell c5" style="letter-spacing:-0.175px">The Unrighteous Shall Not Inherit the Kingdom of God!.md</div><div class="cell c6"><svg class="ic dic" width="13" height="13" viewBox="0 0 24 24" fill="none" stroke="currentColor" stroke-width="2.5" stroke-linecap="round" stroke-linejoin="round" ><path d="M8 2v4"/><path d="M16 2v4"/><rect width="18" height="18" x="3" y="4" rx="2"/><path d="M3 10h18"/></svg><span class="dt">19<em>/</em>04<em>/</em>2024</span></div><div class="cell c7">Thunder 5 &amp; 6</div></div>
<div class="row"><div class="cell c1">30</div><div class="cell c2">2024-04-17</div><div class="cell c3" style="letter-spacing:-0.4px"><a>The Faithful Shepherd Says - You Are Like Sheep Gone Astray!</a></div><div class="cell c4">In the Works of Peter</div><div class="cell c5" style="letter-spacing:-0.4px">The Faithful Shepherd Says - You Are Like Sheep Gone Astray!.md</div><div class="cell c6"><svg class="ic dic" width="13" height="13" viewBox="0 0 24 24" fill="none" stroke="currentColor" stroke-width="2.5" stroke-linecap="round" stroke-linejoin="round" ><path d="M8 2v4"/><path d="M16 2v4"/><rect width="18" height="18" x="3" y="4" rx="2"/><path d="M3 10h18"/></svg><span class="dt">17<em>/</em>04<em>/</em>2024</span></div><div class="cell c7"></div></div>
<div class="row"><div class="cell c1">31</div><div class="cell c2">2024-04-15</div><div class="cell c3"><a>Why Have You Forsaken My Mysteries</a></div><div class="cell c4">In the Works of Peter</div><div class="cell c5">Why Have You Forsaken My Mysteries.md</div><div class="cell c6"><svg class="ic dic" width="13" height="13" viewBox="0 0 24 24" fill="none" stroke="currentColor" stroke-width="2.5" stroke-linecap="round" stroke-linejoin="round" ><path d="M8 2v4"/><path d="M16 2v4"/><rect width="18" height="18" x="3" y="4" rx="2"/><path d="M3 10h18"/></svg><span class="dt">15<em>/</em>04<em>/</em>2024</span></div><div class="cell c7"></div></div>
<div class="row"><div class="cell c1">32</div><div class="cell c2">2024-04-12</div><div class="cell c3"><a>Every Secret Will Come to Light!</a></div><div class="cell c4">In the Works of Peter</div><div class="cell c5">Every Secret Will Come to Light!.md</div><div class="cell c6"><svg class="ic dic" width="13" height="13" viewBox="0 0 24 24" fill="none" stroke="currentColor" stroke-width="2.5" stroke-linecap="round" stroke-linejoin="round" ><path d="M8 2v4"/><path d="M16 2v4"/><rect width="18" height="18" x="3" y="4" rx="2"/><path d="M3 10h18"/></svg><span class="dt">12<em>/</em>04<em>/</em>2024</span></div><div class="cell c7"></div></div>
<div class="row"><div class="cell c1">33</div><div class="cell c2">2024-04-10</div><div class="cell c3"><a>Be Of Good Cheer!</a></div><div class="cell c4">In the Works of Peter</div><div class="cell c5">Be Of Good Cheer!.md</div><div class="cell c6"><svg class="ic dic" width="13" height="13" viewBox="0 0 24 24" fill="none" stroke="currentColor" stroke-width="2.5" stroke-linecap="round" stroke-linejoin="round" ><path d="M8 2v4"/><path d="M16 2v4"/><rect width="18" height="18" x="3" y="4" rx="2"/><path d="M3 10h18"/></svg><span class="dt">10<em>/</em>04<em>/</em>2024</span></div><div class="cell c7"></div></div>
<div class="row"><div class="cell c1">34</div><div class="cell c2">2024-04-05</div><div class="cell c3"><a>Watchman Awake!</a></div><div class="cell c4">In the Works of John The Baptist</div><div class="cell c5">Watchman Awake!.md</div><div class="cell c6"><svg class="ic dic" width="13" height="13" viewBox="0 0 24 24" fill="none" stroke="currentColor" stroke-width="2.5" stroke-linecap="round" stroke-linejoin="round" ><path d="M8 2v4"/><path d="M16 2v4"/><rect width="18" height="18" x="3" y="4" rx="2"/><path d="M3 10h18"/></svg><span class="dt">05<em>/</em>04<em>/</em>2024</span></div><div class="cell c7"></div></div>
<div class="row"><div class="cell c1">35</div><div class="cell c2">2024-04-01</div><div class="cell c3"><a>Have I Not Justified You</a></div><div class="cell c4">In the Works of John The Baptist</div><div class="cell c5">Have I Not Justified You.md</div><div class="cell c6" style="width:39px"><svg class="ic dic" width="13" height="13" viewBox="0 0 24 24" fill="none" stroke="currentColor" stroke-width="2.5" stroke-linecap="round" stroke-linejoin="round" ><path d="M8 2v4"/><path d="M16 2v4"/><rect width="18" height="18" x="3" y="4" rx="2"/><path d="M3 10h18"/></svg><span class="dt">01<em>/</em>04<em>/</em>2024</span></div><div class="cell c7"></div></div>
</div>
<div class="vscroll"></div>
<div class="status"><span class="s1">0 backlinks</span><span class="s2">145 words</span><span class="s3">1,273 characters</span><svg class="ic sync" width="15" height="15" viewBox="0 0 24 24" fill="none" stroke="currentColor" stroke-width="2.5" stroke-linecap="round" stroke-linejoin="round" ><path d="M21 12a9 9 0 0 0-15-6.700L3 8"/><path d="M3 3v5h5"/><path d="M3 12a9 9 0 0 0 15 6.700l3-2.700"/><path d="M21 21v-5h-5"/><path d="M3 3l18 18"/></svg></div>
</div>
<div class="sline"></div>
</div>
</body></html>
